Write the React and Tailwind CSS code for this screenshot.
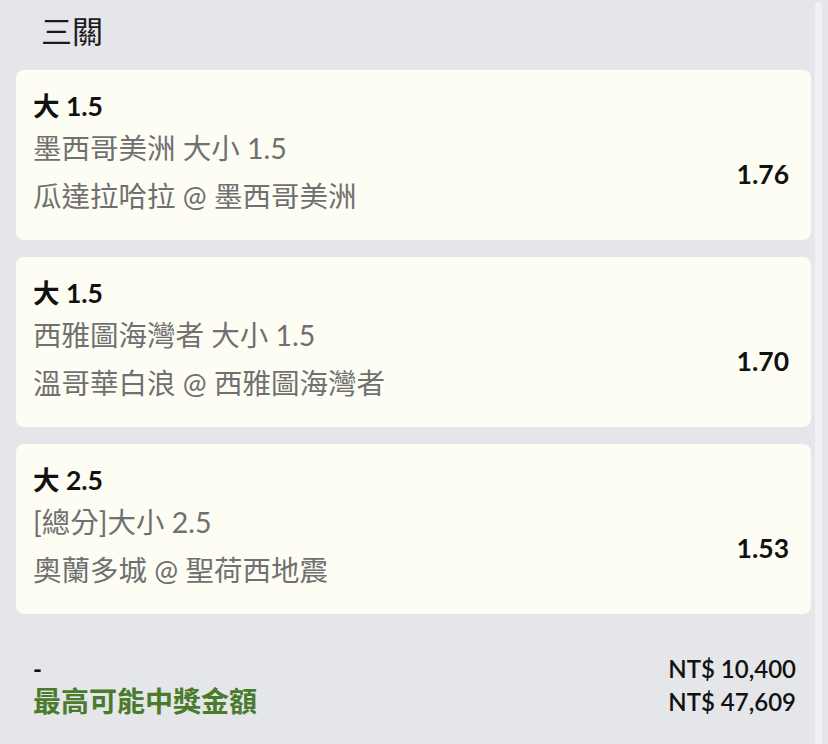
import React from "react";

const latin = { fontFamily: "Lato, 'Noto Sans CJK TC', sans-serif" };

const bets = [
  { pick: "大 1.5", market: "墨西哥美洲 大小 1.5", match: "瓜達拉哈拉 @ 墨西哥美洲", odds: "1.76" },
  { pick: "大 1.5", market: "西雅圖海灣者 大小 1.5", match: "溫哥華白浪 @ 西雅圖海灣者", odds: "1.70" },
  { pick: "大 2.5", market: "[總分]大小 2.5", match: "奧蘭多城 @ 聖荷西地震", odds: "1.53" },
];

function Card({ b }) {
  return (
    <div className="flex rounded-[8px] bg-[#fdfdf4] pl-[17px] pr-[22px] pt-[20px] pb-[20px]">
      <div className="flex-1 min-w-0">
        <div className="h-[32px] leading-[32px] text-[26.5px] font-bold text-[#111]">{b.pick}</div>
        <div className="mt-[6px] h-[40px] leading-[40px] text-[28.5px] text-[#707070]">{b.market}</div>
        <div className="mt-[4px] h-[48px] leading-[48px] text-[28.5px] text-[#707070]">{b.match}</div>
      </div>
      <div className="flex items-center pt-[40px] text-[26.5px] font-bold text-[#111]">{b.odds}</div>
    </div>
  );
}

export default function App() {
  return (
    <div className="relative w-[828px] h-[744px] overflow-hidden bg-[#e5e6e9]" style={latin}>
      <div className="h-[70px] pl-[41px] pt-[14px] leading-[34px] text-[31px] text-[#1a1a1a]">三關</div>
      <div className="flex flex-col gap-[17px] pl-[16px] pr-[17px]">
        {bets.map((b, i) => (
          <Card key={i} b={b} />
        ))}
      </div>
      <div className="flex justify-between pl-[33px] pr-[32px] pt-[38px]">
        <div>
          <div className="h-[33px] leading-[33px] text-[24px] font-bold text-[#111]">-</div>
          <div className="h-[33px] leading-[33px] text-[28px] font-bold text-[#4a7b2c]">最高可能中獎金額</div>
        </div>
        <div className="text-right">
          <div className="h-[33px] leading-[33px] text-[24px] font-semibold text-[#111]">NT$ 10,400</div>
          <div className="h-[33px] leading-[33px] text-[24px] font-semibold text-[#111]">NT$ 47,609</div>
        </div>
      </div>
      <div className="absolute right-[6px] top-[2px] bottom-0 w-[7px] rounded-t-full bg-[#f1f1f3]" />
    </div>
  );
}
